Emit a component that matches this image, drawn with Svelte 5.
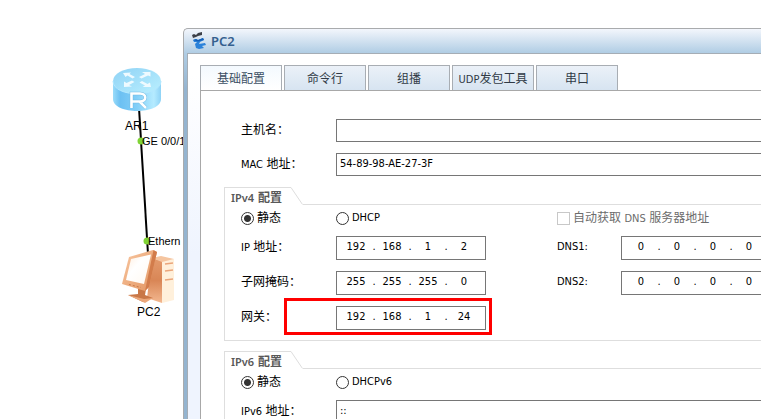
<script>
  const tabs = ['基础配置', '命令行', '组播', 'UDP发包工具', '串口'];
  let active = $state(0);
  let mode4 = $state('static');
  let mode6 = $state('static');

  const rows = [
    { id: 'ip', latin: 'IP', text: '地址：', value: ['192', '168', '1', '2'], dns: 'DNS1:' },
    { id: 'mask', latin: '', text: '子网掩码：', value: ['255', '255', '255', '0'], dns: 'DNS2:' },
    { id: 'gateway', latin: '', text: '网关：', value: ['192', '168', '1', '24'], marked: true }
  ];
</script>

{#snippet address(name, parts, firstId)}
  <div class="address" role="group" aria-label={name}>
    {#each parts as part, i}
      {#if i > 0}<span class="dot">.</span>{/if}
      <input id={i === 0 ? firstId : undefined} aria-label={`${name} ${i + 1}`} value={part} maxlength="3" />
    {/each}
  </div>
{/snippet}

{#snippet groupHead(name)}
  <legend>
    <span class="head-title"><span class="latin">{name}</span> 配置</span>
    <svg class="slope" width="12" height="18" viewBox="0 0 12 18" aria-hidden="true">
      <path d="M0 .5 L11.5 17.5" fill="none" stroke="#dedede" />
    </svg>
    <span class="head-line"></span>
  </legend>
{/snippet}

<main class="desktop">
  <section class="topology" aria-label="Topology">
    <svg class="drawing" width="183" height="419" viewBox="0 0 183 419" aria-hidden="true">
      <defs>
        <linearGradient id="side" x1="0" x2="1">
          <stop offset="0" stop-color="#9adcfa" />
          <stop offset=".15" stop-color="#6cc0f2" />
          <stop offset=".5" stop-color="#83cff8" />
          <stop offset=".85" stop-color="#b5ebff" />
          <stop offset="1" stop-color="#8fd3f6" />
        </linearGradient>
        <linearGradient id="lid" x1="0" y1="0" x2="1" y2="1">
          <stop offset="0" stop-color="#8fd2f5" />
          <stop offset="1" stop-color="#baf0ff" />
        </linearGradient>
        <linearGradient id="frame" x1="0" y1="0" x2="1" y2="1">
          <stop offset="0" stop-color="#f9c8a2" />
          <stop offset="1" stop-color="#e2935f" />
        </linearGradient>
        <linearGradient id="screen" x1="0" y1="0" x2="1" y2="1">
          <stop offset="0" stop-color="#ffeede" />
          <stop offset=".4" stop-color="#ffffff" />
          <stop offset="1" stop-color="#fff8f0" />
        </linearGradient>
        <linearGradient id="tower" x1="0" y1="0" x2="0" y2="1">
          <stop offset="0" stop-color="#e39a6c" />
          <stop offset=".5" stop-color="#d98656" />
          <stop offset="1" stop-color="#f3b890" />
        </linearGradient>
      </defs>

      <path d="M139 108 L148 254" stroke="#000" stroke-width="2" />

      <path d="M113 81 V99 C113 115 161 115 161 99 V81Z" fill="url(#side)" />
      <ellipse cx="137" cy="81" rx="24" ry="13" fill="url(#lid)" />
      <path d="M113 81 C113 98 161 98 161 81" fill="none" stroke="#b4e8ff" />
      <g fill="#eefaff">
        <path d="M123 73 L131 72.500 L129.500 74 L135 77 L132.500 78.500 L127.500 75.500 L125.500 77Z" />
        <path d="M142 72 L150.500 72 L150.500 76.500 L148 75.500 L141.500 78.500 L139 77 L145 74Z" />
        <path d="M151 87 L142.500 87 L145 85.500 L139.500 82.500 L142 81 L147.500 84 L150 82.500Z" />
        <path d="M124 81.500 L126.500 83 L132 80.500 L134.500 82 L129 85 L132 86.500 L124 87Z" />
      </g>
      <path d="M131.500 108 V93.500 H140 C147 93.500 147 101.500 140 101.500 H132 M139.500 101.500 L146 108" fill="none" stroke="#6fb9e2" stroke-width="3.600" />
      <path d="M131.500 108 V93.500 H140 C147 93.500 147 101.500 140 101.500 H132 M139.500 101.500 L146 108" fill="none" stroke="#fff" stroke-width="2.600" />

      <path d="M152 258 L162 261 V303 L147 298Z" fill="url(#tower)" />
      <path d="M162 261 L174 259 V300 L162 303Z" fill="#fff0db" />
      <path d="M152 258 L161 256 L174 259 L162 262Z" fill="#f5c5a0" />
      <path d="M165 264 L173 263 M165 271 L173 270 M165 280 L173 279" stroke="#eaa57a" stroke-width="1.500" />
      <path d="M138 288 L146 289 L145 295 L153 298 L143 302 L128 295 L138 294Z" fill="#c97747" />
      <path d="M128 295 L144 299 L153 298 L145 303Z" fill="#eba77b" />
      <path d="M129 257 L153 250 L157 252 L149 287 L145 291 L122 284Z" fill="url(#frame)" />
      <path d="M153.500 250 L157 252 L149 287 L145 291Z" fill="#d27c4b" />
      <path d="M131 259 L151 254.500 L144 284 L126 280Z" fill="url(#screen)" />
      <path d="M129 284.500 L141 287.500" stroke="#c9794a" stroke-dasharray="2 2" />

      <circle cx="141" cy="141" r="3.500" fill="#7fd335" />
      <circle cx="147" cy="241" r="3.500" fill="#7fd335" />
    </svg>
    <span class="node router">AR1</span>
    <span class="port ge">GE 0/0/1</span>
    <span class="port eth">Ethern</span>
    <span class="node pc">PC2</span>
  </section>

  <section class="window" aria-label="PC2">
    <header>
      <svg width="15" height="18" viewBox="0 0 15 18" aria-hidden="true">
        <path d="M0 3 L2 2 L4 3 L6 1 L10 0 L10 3 L6 4 L4 5 L1 6Z" fill="#3c4048" />
        <path d="M1 8 L4 7 L6 8 L11 6 L12 8 L8 10 L7 12 L13 11 L14 13 L10 14 L12 16 L7 17 L4 16 L3 12 L5 10 L2 10Z" fill="#2b82da" />
        <path d="M1 8 L4 7 L6 8 L11 6 L12 8 L6 9.500Z" fill="#1460b8" />
      </svg>
      <h1>PC2</h1>
    </header>

    <div class="client">
      <div class="tabs" role="tablist">
        {#each tabs as tab, i}
          <button type="button" role="tab" aria-selected={active === i} class:active={active === i} onclick={() => (active = i)}>
            {#if tab.startsWith('UDP')}<span class="latin">UDP</span>{tab.slice(3)}{:else}{tab}{/if}
          </button>
        {/each}
      </div>

      <form class="pane">
        <div class="row top">
          <label for="host">主机名：</label>
          <input class="wide" id="host" />
        </div>
        <div class="row top">
          <label for="mac"><span class="latin">MAC</span> 地址：</label>
          <input class="wide" id="mac" value="54-89-98-AE-27-3F" />
        </div>

        <fieldset>
          {@render groupHead('IPv4')}
          <div class="body">
            <div class="options">
              <label class="first"><input type="radio" name="v4" value="static" bind:group={mode4} />静态</label>
              <label class="second"><input type="radio" name="v4" value="dhcp" bind:group={mode4} /><span class="latin">DHCP</span></label>
              <label class="auto"><input type="checkbox" disabled /><span>自动获取 <span class="latin">DNS</span> 服务器地址</span></label>
            </div>
            {#each rows as row}
              <div class="row">
                <label for={row.id}>{#if row.latin}<span class="latin">{row.latin}</span>&nbsp;{/if}{row.text}</label>
                {@render address(row.latin + row.text, row.value, row.id)}
                {#if row.dns}
                  <label class="dns latin" for={row.dns}>{row.dns}</label>
                  {@render address(row.dns, ['0', '0', '0', '0'], row.dns)}
                {/if}
                {#if row.marked}<span class="mark"></span>{/if}
              </div>
            {/each}
          </div>
        </fieldset>

        <fieldset>
          {@render groupHead('IPv6')}
          <div class="body">
            <div class="options">
              <label class="first"><input type="radio" name="v6" value="static" bind:group={mode6} />静态</label>
              <label class="second"><input type="radio" name="v6" value="dhcp" bind:group={mode6} /><span class="latin">DHCPv6</span></label>
            </div>
            <div class="row">
              <label for="ip6"><span class="latin">IPv6</span> 地址：</label>
              <input class="wide" id="ip6" value="::" />
            </div>
          </div>
        </fieldset>
      </form>
    </div>
  </section>
</main>

<style>
  /* flow-root keeps the window's top margin inside the desktop */
  .desktop {
    position: relative;
    display: flow-root;
    height: 100vh;
    overflow: hidden;
    background: #fff;
    color: #000;
    font: 12px/20px 'DejaVu Sans Condensed', 'Noto Sans CJK SC', sans-serif;
  }
  input, button { font: inherit; color: inherit; }
  .latin, .wide, .address { font-size: 11px; }

  .drawing { position: absolute; left: 0; top: 0; }
  .node, .port {
    position: absolute;
    font-family: 'Liberation Sans', sans-serif;
    line-height: 14px;
    white-space: nowrap;
  }
  .port { font-size: 11px; }
  .router { left: 125px; top: 119px; }
  .ge { left: 142px; top: 134px; }
  .eth { left: 148px; top: 234px; }
  .pc { left: 137px; top: 305px; }

  .window {
    position: relative;
    box-sizing: border-box;
    min-height: 100vh;
    margin: 28px 0 0 183px;
    padding-left: 3px;
    border: solid #a9abad;
    border-width: 1px 0 0 1px;
    border-radius: 5px 0 0 0;
    background: linear-gradient(#f3f6fc, #b0cde4 24px, #94b4d0 60px);
  }
  header {
    display: flex;
    align-items: center;
    gap: 4px;
    height: 24px;
    padding-left: 5px;
  }
  h1 { margin: 0; color: #35608f; font: 600 13px/20px 'Noto Sans', sans-serif; }
  .client {
    min-height: 100vh;
    padding: 11px 0 0 12px;
    border: solid #a5adb5;
    border-width: 1px 0 0 1px;
    background: linear-gradient(#fff 20px, #eff4fe 200px);
    background-size: 12px 100%;
    background-repeat: no-repeat;
    background-color: #fff;
  }
  .tabs { display: flex; gap: 2px; }
  .tabs button {
    width: 82px;
    height: 25px;
    padding: 2px 0 0;
    border: 1px solid #a8adb3;
    border-bottom: 0;
    background: linear-gradient(#ebf1f8, #d7e4f1);
    color: #303a46;
    white-space: nowrap;
  }
  .tabs .active { background: linear-gradient(#f3f9fe, #fff); color: #3c5064; }

  .pane {
    min-height: 100vh;
    padding: 28px 0 0 23px;
    border: solid #a8a8a8;
    border-width: 1px 0 0 1px;
    background: #fff;
  }
  .row { position: relative; display: flex; margin-bottom: 11px; }
  .row label { flex: none; width: 95px; line-height: 22px; white-space: nowrap; }
  .top { padding-left: 17px; }
  .wide {
    flex: 1;
    box-sizing: border-box;
    min-width: 0;
    height: 23px;
    padding: 0 0 2px 3px;
    border: 1px solid #767676;
    border-right: 0;
    border-radius: 0;
    background: #fff;
  }

  fieldset { min-width: 0; margin: 0 0 10px; padding: 0; border: 0; }
  legend { display: flex; width: 100%; height: 18px; padding: 0; }
  .head-title {
    box-sizing: border-box;
    width: 67px;
    padding-left: 6px;
    border: solid #dedede;
    border-width: 1px 0 0 1px;
    color: #585858;
    font-weight: bold;
    white-space: nowrap;
  }
  .head-title .latin { font-family: 'Noto Sans', sans-serif; font-weight: 600; }
  .slope { flex: none; }
  .head-line { box-sizing: border-box; flex: 1; height: 18px; border-bottom: 1px solid #dedede; }
  .body {
    padding: 5px 0 10px 16px;
    border: solid #dedede;
    border-width: 0 0 1px 1px;
  }
  .body .row:last-child { margin-bottom: 0; }
  .options { display: flex; height: 16px; margin-bottom: 10px; }
  .options label { display: flex; flex: none; align-items: center; gap: 3px; white-space: nowrap; }
  .first { width: 95px; }
  .second { width: 221px; }
  .auto { color: #6c6c6c; }
  .options input {
    appearance: none;
    box-sizing: border-box;
    flex: none;
    width: 13px;
    height: 13px;
    margin: 0;
    border: 1px solid #333;
    border-radius: 50%;
    background: #fff;
  }
  .options input:checked { background: radial-gradient(circle, #333 3px, #fff 4px); }
  .options input[type='checkbox'] { border-color: #c8c8c8; border-radius: 0; }

  .address {
    display: flex;
    flex: none;
    box-sizing: border-box;
    width: 150px;
    height: 24px;
    padding: 0 4px;
    border: 1px solid #767676;
    background: #fff;
  }
  .address input {
    box-sizing: border-box;
    width: 30px;
    height: 20px;
    padding: 0;
    border: 0;
    background: none;
    text-align: center;
  }
  .dot { width: 6px; text-align: center; }
  .row .dns { width: 64px; margin-left: 71px; }
  .mark {
    position: absolute;
    left: 43px;
    top: -8px;
    box-sizing: border-box;
    width: 208px;
    height: 37px;
    border: 3px solid #f00;
    pointer-events: none;
  }
</style>
